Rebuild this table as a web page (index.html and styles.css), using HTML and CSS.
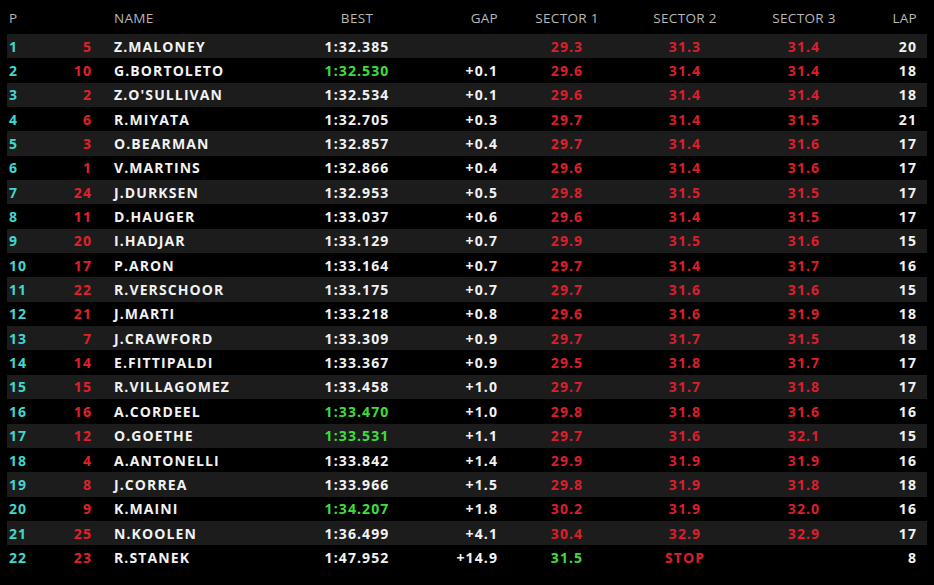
FILE: index.html
```html
<!DOCTYPE html>
<html>
<head>
<meta charset="utf-8">
<link rel="stylesheet" href="styles.css">
</head>
<body>
<div class="board">
  <div class="row head">
    <div class="c pos">P</div><div class="c num"></div><div class="c name">NAME</div><div class="c best">BEST</div><div class="c gap">GAP</div><div class="c s1">SECTOR 1</div><div class="c s2">SECTOR 2</div><div class="c s3">SECTOR 3</div><div class="c lap">LAP</div>
  </div>
  <div class="row odd"><div class="c pos">1</div><div class="c num">5</div><div class="c name">Z.MALONEY</div><div class="c best">1:32.385</div><div class="c gap"></div><div class="c s1 red">29.3</div><div class="c s2 red">31.3</div><div class="c s3 red">31.4</div><div class="c lap">20</div></div>
  <div class="row"><div class="c pos">2</div><div class="c num">10</div><div class="c name">G.BORTOLETO</div><div class="c best green">1:32.530</div><div class="c gap">+0.1</div><div class="c s1 red">29.6</div><div class="c s2 red">31.4</div><div class="c s3 red">31.4</div><div class="c lap">18</div></div>
  <div class="row odd"><div class="c pos">3</div><div class="c num">2</div><div class="c name">Z.O'SULLIVAN</div><div class="c best">1:32.534</div><div class="c gap">+0.1</div><div class="c s1 red">29.6</div><div class="c s2 red">31.4</div><div class="c s3 red">31.4</div><div class="c lap">18</div></div>
  <div class="row"><div class="c pos">4</div><div class="c num">6</div><div class="c name">R.MIYATA</div><div class="c best">1:32.705</div><div class="c gap">+0.3</div><div class="c s1 red">29.7</div><div class="c s2 red">31.4</div><div class="c s3 red">31.5</div><div class="c lap">21</div></div>
  <div class="row odd"><div class="c pos">5</div><div class="c num">3</div><div class="c name">O.BEARMAN</div><div class="c best">1:32.857</div><div class="c gap">+0.4</div><div class="c s1 red">29.7</div><div class="c s2 red">31.4</div><div class="c s3 red">31.6</div><div class="c lap">17</div></div>
  <div class="row"><div class="c pos">6</div><div class="c num">1</div><div class="c name">V.MARTINS</div><div class="c best">1:32.866</div><div class="c gap">+0.4</div><div class="c s1 red">29.6</div><div class="c s2 red">31.4</div><div class="c s3 red">31.6</div><div class="c lap">17</div></div>
  <div class="row odd"><div class="c pos">7</div><div class="c num">24</div><div class="c name">J.DURKSEN</div><div class="c best">1:32.953</div><div class="c gap">+0.5</div><div class="c s1 red">29.8</div><div class="c s2 red">31.5</div><div class="c s3 red">31.5</div><div class="c lap">17</div></div>
  <div class="row"><div class="c pos">8</div><div class="c num">11</div><div class="c name">D.HAUGER</div><div class="c best">1:33.037</div><div class="c gap">+0.6</div><div class="c s1 red">29.6</div><div class="c s2 red">31.4</div><div class="c s3 red">31.5</div><div class="c lap">17</div></div>
  <div class="row odd"><div class="c pos">9</div><div class="c num">20</div><div class="c name">I.HADJAR</div><div class="c best">1:33.129</div><div class="c gap">+0.7</div><div class="c s1 red">29.9</div><div class="c s2 red">31.5</div><div class="c s3 red">31.6</div><div class="c lap">15</div></div>
  <div class="row"><div class="c pos">10</div><div class="c num">17</div><div class="c name">P.ARON</div><div class="c best">1:33.164</div><div class="c gap">+0.7</div><div class="c s1 red">29.7</div><div class="c s2 red">31.4</div><div class="c s3 red">31.7</div><div class="c lap">16</div></div>
  <div class="row odd"><div class="c pos">11</div><div class="c num">22</div><div class="c name">R.VERSCHOOR</div><div class="c best">1:33.175</div><div class="c gap">+0.7</div><div class="c s1 red">29.7</div><div class="c s2 red">31.6</div><div class="c s3 red">31.6</div><div class="c lap">15</div></div>
  <div class="row"><div class="c pos">12</div><div class="c num">21</div><div class="c name">J.MARTI</div><div class="c best">1:33.218</div><div class="c gap">+0.8</div><div class="c s1 red">29.6</div><div class="c s2 red">31.6</div><div class="c s3 red">31.9</div><div class="c lap">18</div></div>
  <div class="row odd"><div class="c pos">13</div><div class="c num">7</div><div class="c name">J.CRAWFORD</div><div class="c best">1:33.309</div><div class="c gap">+0.9</div><div class="c s1 red">29.7</div><div class="c s2 red">31.7</div><div class="c s3 red">31.5</div><div class="c lap">18</div></div>
  <div class="row"><div class="c pos">14</div><div class="c num">14</div><div class="c name">E.FITTIPALDI</div><div class="c best">1:33.367</div><div class="c gap">+0.9</div><div class="c s1 red">29.5</div><div class="c s2 red">31.8</div><div class="c s3 red">31.7</div><div class="c lap">17</div></div>
  <div class="row odd"><div class="c pos">15</div><div class="c num">15</div><div class="c name">R.VILLAGOMEZ</div><div class="c best">1:33.458</div><div class="c gap">+1.0</div><div class="c s1 red">29.7</div><div class="c s2 red">31.7</div><div class="c s3 red">31.8</div><div class="c lap">17</div></div>
  <div class="row"><div class="c pos">16</div><div class="c num">16</div><div class="c name">A.CORDEEL</div><div class="c best green">1:33.470</div><div class="c gap">+1.0</div><div class="c s1 red">29.8</div><div class="c s2 red">31.8</div><div class="c s3 red">31.6</div><div class="c lap">16</div></div>
  <div class="row odd"><div class="c pos">17</div><div class="c num">12</div><div class="c name">O.GOETHE</div><div class="c best green">1:33.531</div><div class="c gap">+1.1</div><div class="c s1 red">29.7</div><div class="c s2 red">31.6</div><div class="c s3 red">32.1</div><div class="c lap">15</div></div>
  <div class="row"><div class="c pos">18</div><div class="c num">4</div><div class="c name">A.ANTONELLI</div><div class="c best">1:33.842</div><div class="c gap">+1.4</div><div class="c s1 red">29.9</div><div class="c s2 red">31.9</div><div class="c s3 red">31.9</div><div class="c lap">16</div></div>
  <div class="row odd"><div class="c pos">19</div><div class="c num">8</div><div class="c name">J.CORREA</div><div class="c best">1:33.966</div><div class="c gap">+1.5</div><div class="c s1 red">29.8</div><div class="c s2 red">31.9</div><div class="c s3 red">31.8</div><div class="c lap">18</div></div>
  <div class="row"><div class="c pos">20</div><div class="c num">9</div><div class="c name">K.MAINI</div><div class="c best green">1:34.207</div><div class="c gap">+1.8</div><div class="c s1 red">30.2</div><div class="c s2 red">31.9</div><div class="c s3 red">32.0</div><div class="c lap">16</div></div>
  <div class="row odd"><div class="c pos">21</div><div class="c num">25</div><div class="c name">N.KOOLEN</div><div class="c best">1:36.499</div><div class="c gap">+4.1</div><div class="c s1 red">30.4</div><div class="c s2 red">32.9</div><div class="c s3 red">32.9</div><div class="c lap">17</div></div>
  <div class="row"><div class="c pos">22</div><div class="c num">23</div><div class="c name">R.STANEK</div><div class="c best">1:47.952</div><div class="c gap">+14.9</div><div class="c s1 green">31.5</div><div class="c s2 red">STOP</div><div class="c s3 red"></div><div class="c lap">8</div></div>
</div>
</body>
</html>
```
FILE: styles.css
```css
html, body {
  margin: 0;
  padding: 0;
  background: #000;
}
body {
  font-family: "Open Sans", "DejaVu Sans", sans-serif;
  width: 934px;
  height: 585px;
  overflow: hidden;
}
.board {
  padding-left: 7px;
  width: 920px;
}
.row {
  display: grid;
  grid-template-columns: 53px 32px 218px 94px 94px 138px 98px 140px 43px 10px;
  height: 24.35px;
  align-items: center;
  font-size: 14px;
  font-weight: 700;
  letter-spacing: 1.1px;
  color: #f2f2f2;
  white-space: nowrap;
}
.row.odd {
  background: #1c1c1c;
}
.row.head {
  height: 34px;
  font-size: 13.5px;
  font-weight: 400;
  letter-spacing: 0.3px;
  color: #b8b8b8;
  padding-top: 1px;
  box-sizing: border-box;
}
.c { overflow: visible; }
.pos { padding-left: 2px; color: #3fd8cf; }
.head .pos { color: #b8b8b8; }
.num { text-align: right; color: #e0202b; }
.name { padding-left: 22px; }
.best { text-align: center; }
.gap { text-align: right; }
.s1, .s2, .s3 { text-align: center; }
.lap { text-align: right; }
.red { color: #dc1e2c; }
.green { color: #3ede3a; }
```
